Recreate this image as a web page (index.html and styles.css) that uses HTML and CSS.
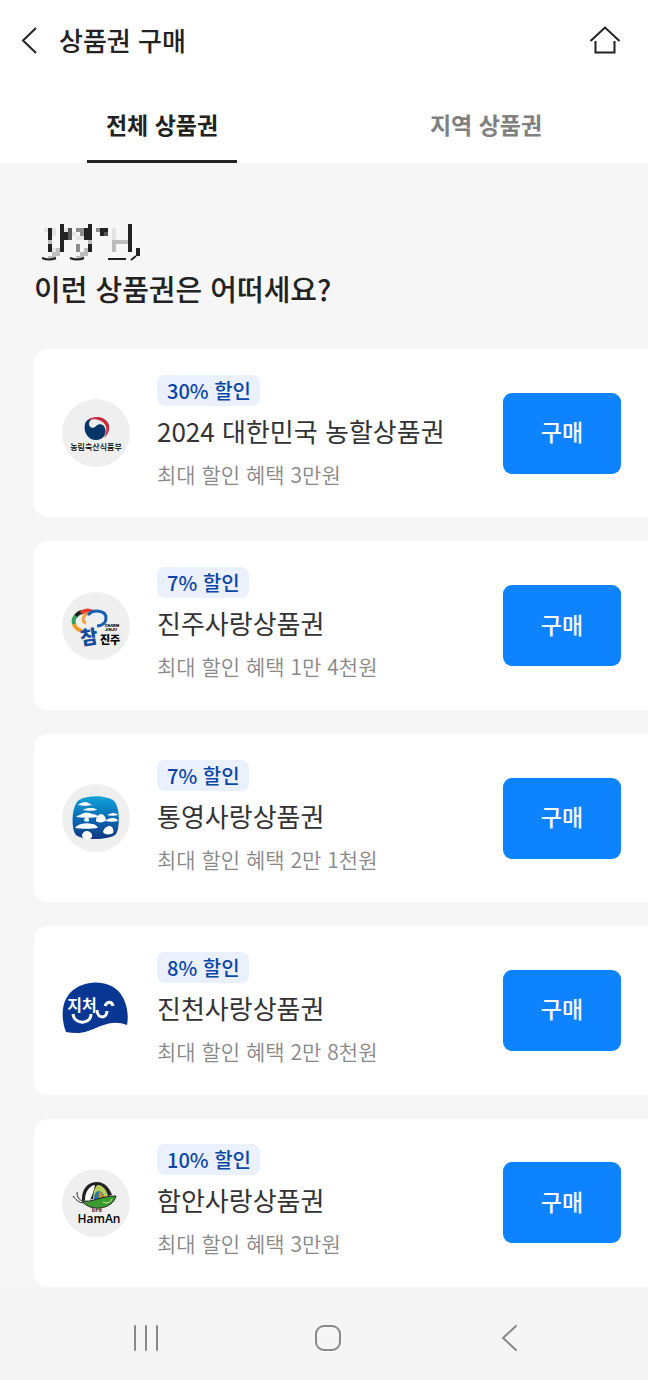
FILE: index.html
```html
<!DOCTYPE html>
<html lang="ko">
<head>
    <meta charset="UTF-8">
    <meta name="viewport" content="width=device-width, initial-scale=1.0">
    <title>상품권 구매</title>
    <link rel="stylesheet" href="styles.css">
</head>
<body>
    <header class="header">
        <button type="button" class="icon-btn" aria-label="뒤로">
            <svg width="18" height="28" viewBox="0 0 18 28"><path d="M16 2 3 14.500 16 27" fill="none" stroke="#222" stroke-width="2"/></svg>
        </button>
        <h1 class="title">상품권 구매</h1>
        <a href="#" class="icon-btn" aria-label="홈">
            <svg width="32" height="30" viewBox="0 0 32 30"><path d="M1.500 16 16 2.500 30.500 16M6.500 16v11.500h19V16" fill="none" stroke="#222" stroke-width="2"/></svg>
        </a>
    </header>

    <nav class="tabs">
        <a href="#" class="tab active">전체 상품권</a>
        <a href="#" class="tab">지역 상품권</a>
    </nav>

    <main class="content">
        <h2 class="greeting">
            <!-- masked user name -->
            <svg class="masked-name" width="104" height="40" viewBox="0 0 104 40" aria-hidden="true">
                <g shape-rendering="crispEdges">
                    <path fill="#e4e4e4" d="M4 4h4v4H4zM24 4h4v4h-4zM12 4h4v8h-4zM32 8h4v4h-4zM56 4h4v4h-4zM72 4h4v12h-4zM12 24h4v4h-4zM36 12h8v4h-8zM20 16h4v4h-4z"/>
                    <path fill="#bdbdbd" d="M12 28h8v4h-8zM40 28h8v4h-8zM16 24h4v4h-4zM44 24h4v4h-4zM72 16h16v4H72zM8 16h4v4H8zM48 16h4v4h-4zM72 20h4v8h-4zM8 32h8v4H8zM36 32h8v4h-8z"/>
                    <path fill="#8c8c8c" d="M36 4h8v4h-8zM40 8h4v4h-4zM36 20h4v8h-4zM56 4h4v4h-4z"/>
                    <path fill="#555" d="M28 4h4v12h-4zM64 8h4v4h-4z"/>
                    <path fill="#222" d="M8 4h4v12H8zM8 20h4v8H8zM20 0h4v28h-4zM24 8h4v8h-4zM44 4h4v12h-4zM48 0h4v16h-4zM48 20h4v8h-4zM60 4h8v4h-8zM60 8h4v4h-4zM88 0h4v28h-4zM96 24h4v8h-4zM68 34h18v2H68z"/>
                </g>
                <path fill="none" stroke="#222" stroke-width="2" d="M2 34q7 3 14 0M30 34q7 3 14 0M91 36l5-4"/>
            </svg>
            이런 상품권은 어떠세요?
        </h2>

        <ul class="list">
            <li class="card">
                <svg class="logo" viewBox="0 0 68 68" aria-hidden="true">
                    <circle cx="34" cy="34" r="34" fill="#efefef"/>
                    <path d="M23 25c-2 8 3 16 11 16 8 0 11-7 9-12-1-4-6-5-9-2-2 3-7 2-7-2 0-2 1-4 3-5-3-1-6 2-7 5z" fill="#063567"/>
                    <path d="M26 21c6-5 18-4 21 5 1 6-2 11-5 13 4-7 3-14-3-17-4-2-8-2-13-1z" fill="#c9283e"/>
                    <text x="34" y="51" class="logo-text" font-size="8">농림축산식품부</text>
                </svg>
                <div class="info">
                    <span class="badge">30% 할인</span>
                    <h3 class="name">2024 대한민국 농할상품권</h3>
                    <p class="benefit">최대 할인 혜택 3만원</p>
                </div>
                <button type="button" class="buy">구매</button>
            </li>

            <li class="card">
                <svg class="logo" viewBox="0 0 68 68" aria-hidden="true">
                    <circle cx="34" cy="34" r="34" fill="#efefef"/>
                    <g fill="none" stroke-width="4">
                        <path d="M20 39c-5-1-8-5-8-8" stroke="#f39a20"/>
                        <path d="M12 32c-1-4 0-7 3-9" stroke="#35a25d"/>
                        <path d="M14 24c2-3 4-4 7-4" stroke="#222"/>
                        <path d="M19 21c4-3 8-3 12-1" stroke="#e63b2e"/>
                        <path d="M24 31c-5-2-3-9 4-10" stroke="#f2a13b" stroke-width="3"/>
                        <path d="M26 23c5-6 18-5 18 3 0 5-4 8-9 8" stroke="#175fb5" stroke-width="3"/>
                    </g>
                    <text x="27" y="52" class="logo-text" font-size="19" font-weight="900" fill="#174b9b" transform="rotate(-8 27 45)">참</text>
                    <text x="48" y="52" class="logo-text" font-size="11" font-weight="900">진주</text>
                    <text x="50" y="35" class="logo-text" font-size="4" font-weight="900">CHARM</text>
                    <text x="49" y="39" class="logo-text" font-size="4" font-weight="900">JINJU</text>
                </svg>
                <div class="info">
                    <span class="badge">7% 할인</span>
                    <h3 class="name">진주사랑상품권</h3>
                    <p class="benefit">최대 할인 혜택 1만 4천원</p>
                </div>
                <button type="button" class="buy">구매</button>
            </li>

            <li class="card">
                <svg class="logo" viewBox="0 0 68 68" aria-hidden="true">
                    <defs>
                        <linearGradient id="sea" x1="0" y1="0" x2="0" y2="1">
                            <stop offset="0" stop-color="#12a3d8"/>
                            <stop offset=".5" stop-color="#076bb5"/>
                            <stop offset="1" stop-color="#123681"/>
                        </linearGradient>
                    </defs>
                    <circle cx="34" cy="34" r="34" fill="#efefef"/>
                    <path d="M17 16c9-5 27-5 35 1 6 6 6 27 2 33-5 6-33 7-40 1-5-5-5-29 3-35z" fill="url(#sea)"/>
                    <g fill="#fff">
                        <path d="M16 21c2-2 5-3 8-3 3 1 4 2 6 3-4 1-10 1-14 0zM21 26c3-2 6-2 9-2 3 0 4 1 5 2-4 1-10 1-14 0zM14 33c2-2 4-2 6-3 3-2 8-1 10 0 3 0 5 1 7 3-7 1-16 1-23 0zM45 31c2-1 4-2 6-2 3 0 4 1 5 2-3 1-8 1-11 0zM43 37c2-2 5-3 8-3 3 0 4 1 5 3-4 1-9 1-13 0zM13 44c1-2 3-3 6-4 4-1 8-1 11 0 3 0 5 2 6 4-7 1-16 1-23 0z"/>
                        <path d="M22 37c0-4 5-5 5-1 1 2-4 2-5 1zM34 37c0-4 3-7 5-7 3 0 5 4 5 6-1 3-9 3-10 1zM41 48c1-4 4-6 7-6 3 1 4 4 3 7-2 2-9 2-10-1zM20 52c0-4 5-7 9-3 2 2 1 5-1 6-3 1-7 0-8-3z"/>
                    </g>
                </svg>
                <div class="info">
                    <span class="badge">7% 할인</span>
                    <h3 class="name">통영사랑상품권</h3>
                    <p class="benefit">최대 할인 혜택 2만 1천원</p>
                </div>
                <button type="button" class="buy">구매</button>
            </li>

            <li class="card">
                <svg class="logo" viewBox="0 0 68 68" aria-hidden="true">
                    <path d="M4 56C-1 43-1 27 8 17 21 3 47 3 58 17c7 9 9 22 7 32-15-6-25 1-39 6-8 3-15 2-22 1z" fill="#083693"/>
                    <text x="20" y="35" class="logo-text" font-size="16" font-weight="700" fill="#fff">지처</text>
                    <path d="M11 38c1 11 18 11 18 0M35 34c0 9 10 9 10 1M43 30c2-5 7-5 8 0" fill="none" stroke="#fff" stroke-width="3"/>
                </svg>
                <div class="info">
                    <span class="badge">8% 할인</span>
                    <h3 class="name">진천사랑상품권</h3>
                    <p class="benefit">최대 할인 혜택 2만 8천원</p>
                </div>
                <button type="button" class="buy">구매</button>
            </li>

            <li class="card">
                <svg class="logo" viewBox="0 0 68 68" aria-hidden="true">
                    <circle cx="34" cy="34" r="34" fill="#efefef"/>
                    <path d="M20 32c-1-12 6-19 15-19 8 0 13 7 15 13l-8 2z" fill="#222"/>
                    <path d="M23 31c0-8 4-14 10-15-1 5-3 11-5 15z" fill="#fff"/>
                    <path d="M31 31c0-8 2-14 5-15 5 0 9 6 10 11z" fill="#b5cf5c"/>
                    <path d="M32 31c0-6 2-9 5-9 4 1 5 4 5 8z" fill="#2676a5"/>
                    <path d="M37 30c-1-5 0-8 2-7l3 6z" fill="#d98335"/>
                    <path d="M20 32c10 2 18-5 34-5-3 13-25 17-34 5z" fill="#3c9b2e" stroke="#222"/>
                    <path d="M41 33c4 2 8 0 9-3" fill="none" stroke="#dff0a6"/>
                    <path d="M22 34c-5 0-9-4-11-7M21 32c-4-1-6-4-6-9" fill="none" stroke="#222"/>
                    <text x="35" y="43" class="logo-text latin" font-size="6" font-weight="600">brit</text>
                    <text x="37" y="54" class="logo-text latin" font-size="12" font-weight="600">HamAn</text>
                </svg>
                <div class="info">
                    <span class="badge">10% 할인</span>
                    <h3 class="name">함안사랑상품권</h3>
                    <p class="benefit">최대 할인 혜택 3만원</p>
                </div>
                <button type="button" class="buy">구매</button>
            </li>
        </ul>
    </main>

    <footer class="system-bar">
        <button type="button" class="icon-btn" aria-label="최근 앱">
            <svg width="28" height="28" viewBox="0 0 28 28"><path d="M3 2v24M14 2v24M25 2v24" stroke="#888" stroke-width="2" stroke-linecap="round"/></svg>
        </button>
        <button type="button" class="icon-btn" aria-label="홈 화면">
            <svg width="28" height="28" viewBox="0 0 28 28"><rect x="2" y="2" width="24" height="24" rx="8" fill="none" stroke="#888" stroke-width="2"/></svg>
        </button>
        <button type="button" class="icon-btn" aria-label="이전">
            <svg width="28" height="28" viewBox="0 0 28 28"><path d="M21 2 8 14l13 12" fill="none" stroke="#888" stroke-width="2" stroke-linecap="round"/></svg>
        </button>
    </footer>
</body>
</html>
```

FILE: styles.css
```css
* {
    box-sizing: border-box;
}

body {
    display: flex;
    flex-direction: column;
    min-height: 100vh;
    margin: 0;
    background-color: #f6f6f6;
    color: #222;
    font-family: "Noto Sans CJK KR", sans-serif;
}

h1, h2, h3, p, ul {
    margin: 0;
    padding: 0;
    font-weight: 500;
}

button {
    font-family: inherit;
    cursor: pointer;
}

svg {
    display: block;
}

.icon-btn {
    padding: 0;
    border: none;
    background: none;
}

.header {
    display: flex;
    align-items: center;
    height: 80px;
    padding: 0 27px 0 20px;
    background-color: #fff;
}

.title {
    flex: 1;
    margin-left: 21px;
    font-size: 26px;
    line-height: 40px;
}

.tabs {
    display: flex;
    justify-content: space-around;
    height: 83px;
    background-color: #fff;
}

.tab {
    width: 150px;
    border-bottom: 3px solid transparent;
    color: #808080;
    font-size: 23px;
    font-weight: 700;
    line-height: 88px;
    text-align: center;
    text-decoration: none;
}

.tab.active {
    border-bottom-color: #222;
    color: #222;
}

.content {
    display: flex;
    flex: 1;
    flex-direction: column;
    padding: 61px 0 0 34px;
}

.greeting {
    margin-bottom: 37px;
    font-size: 29px;
    line-height: 48px;
}

.masked-name {
    margin-left: 6px;
}

.list {
    display: flex;
    flex: 1;
    flex-direction: column;
    gap: 24px;
    list-style: none;
}

.card {
    display: flex;
    flex: 1;
    align-items: center;
    padding: 20px 27px 20px 28px;
    border-radius: 14px 0 0 14px;
    background-color: #fff;
}

.logo {
    flex: none;
    width: 68px;
    height: 68px;
}

.logo-text {
    text-anchor: middle;
}

.latin {
    font-family: "Open Sans", sans-serif;
}

.info {
    flex: 1;
    margin-left: 27px;
}

.badge {
    display: inline-block;
    padding: 0 9px 0 10px;
    border-radius: 8px;
    background-color: #eaf0fc;
    color: #0846a8;
    font-size: 20px;
    font-weight: 500;
    line-height: 31px;
    vertical-align: top;
}

.name {
    color: #333;
    font-size: 26px;
    font-weight: 400;
    line-height: 50px;
}

.benefit {
    color: #888;
    font-size: 21px;
    font-weight: 350;
    line-height: 36px;
}

.buy {
    width: 118px;
    height: 81px;
    padding: 0 0 4px;
    border: none;
    border-radius: 9px;
    background-color: #0d83ff;
    color: #fff;
    font-size: 23px;
    font-weight: 500;
}

.system-bar {
    display: flex;
    align-items: center;
    justify-content: space-between;
    height: 93px;
    padding: 9px 125px 0 132px;
    background-color: #f5f5f5;
}
```
